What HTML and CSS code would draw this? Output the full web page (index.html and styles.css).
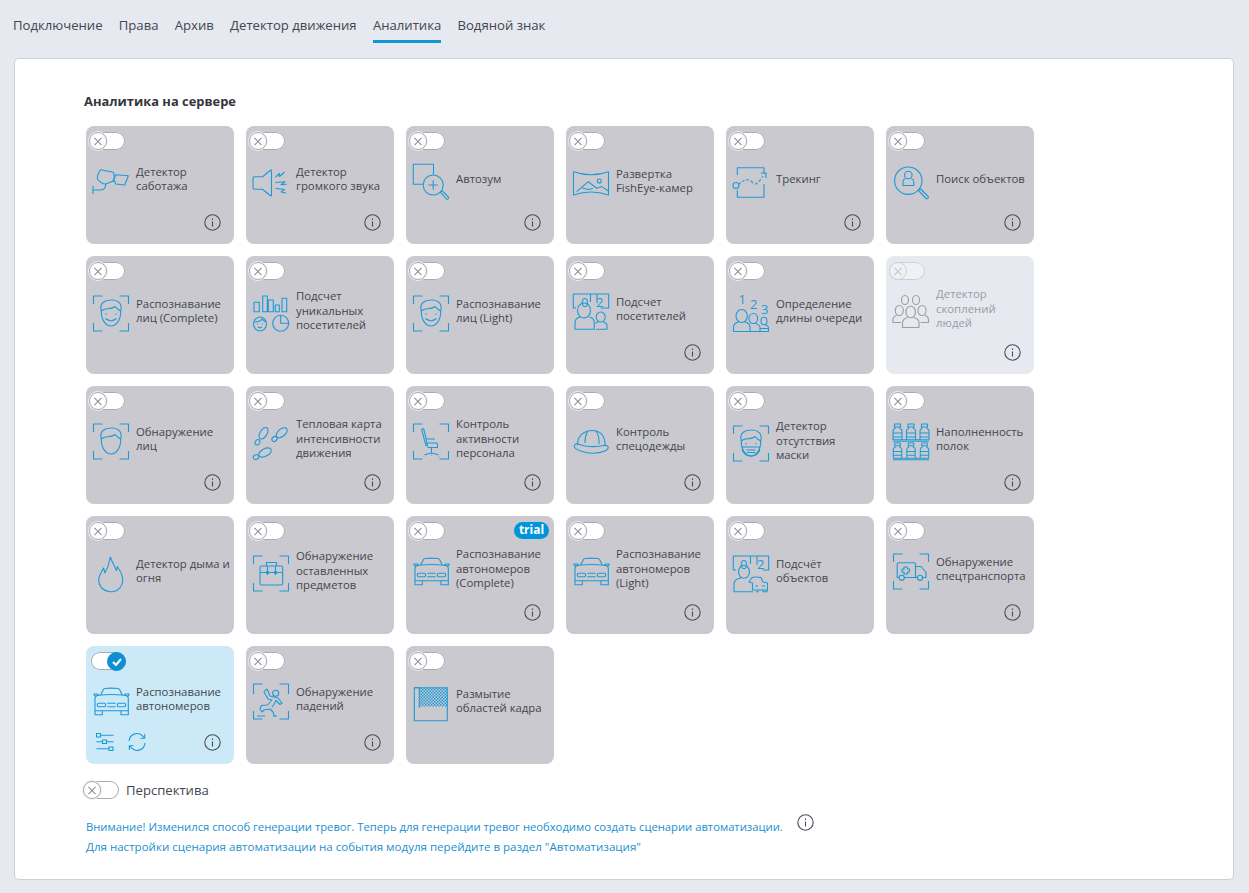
FILE: index.html
```html
<!DOCTYPE html>
<html lang="ru">
<head>
    <meta charset="UTF-8">
    <title>Аналитика</title>
    <link rel="stylesheet" href="styles.css">
</head>
<body>
    <svg class="sprite" xmlns="http://www.w3.org/2000/svg">
        <defs>
            <pattern id="checks" width="3" height="3" patternUnits="userSpaceOnUse">
                <rect width="1.5" height="1.5" fill="#1d9ad8" stroke="none"/>
                <rect x="1.5" y="1.5" width="1.5" height="1.5" fill="#1d9ad8" stroke="none"/>
            </pattern>
        </defs>
        <symbol id="i-frame" viewBox="0 0 36 36" overflow="visible">
            <path d="M.5 11V3h9M26.500 3h9v8M35.500 30v8h-9M9.500 38h-9v-8"/>
        </symbol>
        <symbol id="i-info" viewBox="0 0 17 17" overflow="visible">
            <circle cx="8.500" cy="8.500" r="7.700"/>
            <path d="M8.500 7.500v5M8.500 4.500v1.600"/>
        </symbol>
        <symbol id="i-tamper" viewBox="0 0 36 36" overflow="visible">
            <path d="M4.300 18c0-3 1.500-7 3.400-9.300l12.600 2.600c1 2 1.200 5.500.7 8.400l-8.300 3.300c-3 0-6-2-8.400-5z"/>
            <path d="M22.700 13.700l12.600 1-3.600 9.300-9-1-.7-2.200-2.200-1 1.500-2.200z"/>
            <path d="M0 24.700V33M0 29h7.700c3 0 5-2.500 5-6"/>
        </symbol>
        <symbol id="i-loud" viewBox="0 0 36 36" overflow="visible">
            <path d="M9.500 15.700H1.500q-1.500 0-1.500 1.500v9.600q0 1.500 1.500 1.500h8l8 6.500q1 .6 1-.5V9.700q0-1.100-1-.5z"/>
            <path d="M22.500 16l4-3.500v3l5-4.500M22.500 21.500l9.500-.8-4 3 5.500-.4M22.500 27.500l9 1-3.500 2.500 5 1"/>
        </symbol>
        <symbol id="i-zoom" viewBox="0 0 36 36" overflow="visible">
            <path d="M20.500 13.500V3.300H.3v20h9.600"/>
            <circle cx="20.200" cy="24" r="10"/>
            <path d="M15.500 24h9.400M20.200 19.300v9.400"/>
            <path d="M27.500 31.200l1.500-1.500 6.300 6.300q.6 1-.2 1.800t-1.800.2z"/>
        </symbol>
        <symbol id="i-fisheye" viewBox="0 0 36 36" overflow="visible">
            <path d="M.5 8.700q17.500 6 35 0v23.300q-17.500-6-35 0z"/>
            <path d="M3.700 28.700L15.300 18.700l8.400 6.600 5-1.700 6.800 4.400M9 25l6.300 1.500 4.500-1"/>
            <circle cx="26.300" cy="18" r="2"/>
        </symbol>
        <symbol id="i-track" viewBox="0 0 36 36" overflow="visible">
            <path d="M4.300 14V6.800h26.700v6M31 23v13.300H4.300v-7"/>
            <circle cx="3" cy="24.500" r="3"/>
            <path d="M6 23q3-3 7-4" stroke-dasharray="2.500 1.500"/>
            <path d="M13 19q4-1 7 3t10-7" stroke-dasharray="3 2"/>
            <path d="M28 12h5v5"/>
        </symbol>
        <symbol id="i-search" viewBox="0 0 36 36" overflow="visible">
            <circle cx="15.300" cy="19.700" r="13.700"/>
            <path d="M25.500 29.500l2.200-1.500 7.500 7.500q.6 1-.3 1.800t-1.900.2z"/>
            <circle cx="15.300" cy="14" r="3.800"/>
            <path d="M12.500 17.500q-2.500 1-2.500 3v4h10.800v-4q0-2-2.500-3"/>
        </symbol>
        <symbol id="i-head" viewBox="0 0 36 36" overflow="visible">
            <path d="M8.300 18C8 27 13 33 18 33s10-6 9.700-15"/>
            <path d="M8.300 18C6 10 12 7 18 7c6-.5 12 3 9.700 11-2-1.500-4.700-2.500-5.700-4.500-3 2.500-9 2-12.300 3.500z"/>
        </symbol>
        <symbol id="i-face" viewBox="0 0 36 36" overflow="visible">
            <use href="#i-frame"/>
            <use href="#i-head"/>
            <path d="M13 20.500v1.200M23 20.500v1.200M12.500 25.500q5.500 4.500 11 0"/>
        </symbol>
        <symbol id="i-face-plain" viewBox="0 0 36 36" overflow="visible">
            <use href="#i-frame"/>
            <use href="#i-head"/>
        </symbol>
        <symbol id="i-unique" viewBox="0 0 36 36" overflow="visible">
            <path d="M1 9.300h5.300v9.400H1zM9.700 3h4.600v15.700H9.700zM15.300 7h5v11.700h-5zM22.300 12h4v6.700h-4zM29 5.300h4.700v13.400H29z"/>
            <ellipse cx="7" cy="31" rx="6.500" ry="7"/>
            <path d="M1 29c4 0 7-1 8-3q2 2 4 3M4.500 30.500v1M9.500 30.500v1M5 34q2 1.500 4 0"/>
            <circle cx="27.700" cy="30.300" r="8"/>
            <path d="M27.700 22.300v8h8"/>
        </symbol>
        <symbol id="i-visitors" viewBox="0 0 36 36" overflow="visible">
            <path d="M3 17H.3V3h35.400v14h-8M17.500 3v8M24 3v9"/>
            <ellipse cx="11" cy="19.500" rx="6.500" ry="7.500"/>
            <path d="M7 26q-5 1-5 6v6.300h19.300V32q0-5-5-6"/>
            <ellipse cx="27.700" cy="26" rx="4.500" ry="5"/>
            <path d="M25 31q-2 .5-2.500 1.500M30.500 31q3.500 1 3.500 3.500v3.800H23"/>
        </symbol>
        <symbol id="i-queue" viewBox="0 0 36 36" overflow="visible">
            <ellipse cx="8.700" cy="23" rx="5.700" ry="6.500"/>
            <path d="M5.500 29q-5 1-5 5.500v4h16.500v-4q0-4.500-5-5.500"/>
            <ellipse cx="20.300" cy="25.500" rx="4.300" ry="5"/>
            <path d="M22.500 30.500q4 1 4.500 4v4h-10"/>
            <ellipse cx="31" cy="28" rx="3" ry="3.800"/>
            <path d="M32.500 32q3 .5 3 3v3.500H27M27 35.500h8.500"/>
        </symbol>
        <symbol id="i-crowd" viewBox="0 0 36 36" overflow="visible">
            <ellipse cx="12" cy="9" rx="3.500" ry="4.500"/>
            <ellipse cx="23" cy="9" rx="3.500" ry="4.500"/>
            <ellipse cx="6.300" cy="19.500" rx="4" ry="5"/>
            <ellipse cx="17.700" cy="21" rx="4.800" ry="5.800"/>
            <ellipse cx="29" cy="19.500" rx="4" ry="5"/>
            <path d="M3.500 24.500Q0 25.500 0 29v2.500h8M32 24.500q3.500 1 3.500 4.500v2.500h-8"/>
            <path d="M14.500 26.500Q9.500 28 9.500 32v4.500h16.500V32q0-4-5-5.500"/>
        </symbol>
        <symbol id="i-steps" viewBox="0 0 36 36" overflow="visible">
            <ellipse cx="10.500" cy="12.300" rx="3.500" ry="6.500" transform="rotate(32 10.500 12.300)"/>
            <ellipse cx="4.500" cy="21.300" rx="2.200" ry="2.800" transform="rotate(32 4.500 21.300)"/>
            <ellipse cx="28.700" cy="11.700" rx="3.600" ry="6.500" transform="rotate(50 28.700 11.700)"/>
            <ellipse cx="21.500" cy="18" rx="2.300" ry="2.800" transform="rotate(50 21.500 18)"/>
            <ellipse cx="12" cy="31.500" rx="3.800" ry="6.800" transform="rotate(62 12 31.500)"/>
            <ellipse cx="3" cy="36" rx="2.300" ry="2.800" transform="rotate(62 3 36)"/>
        </symbol>
        <symbol id="i-chair" viewBox="0 0 36 36" overflow="visible">
            <use href="#i-frame"/>
            <path d="M8.500 8.200l2.200-.4 4 17H13z"/>
            <path d="M13 22h10.500q1 0 1 1v3.500H14.500M13 18h9M18.500 26.500v6M11.500 34q7-3.500 14 0"/>
            <path d="M11 35.500v.5M26 35.500v.5M18.500 34.500v.5"/>
        </symbol>
        <symbol id="i-helmet" viewBox="0 0 36 36" overflow="visible">
            <path d="M4.500 24.500C4 15 11 9.500 19.500 9.500c7.500 0 13 5.500 12.500 15"/>
            <path d="M14.500 10.500q-2.500 4.500-2.500 11.500M23 10q3.500 5 3 13"/>
            <path d="M4.500 22.500C2.500 23 1 24 1.200 25.500c.5 3 10 6.700 19 6.700 9 0 15.300-3 15-6 0-1.500-1.700-2-4-1.700-5 1-13 1.500-19 .5-3-.5-6-1.500-7.700-2.500z"/>
        </symbol>
        <symbol id="i-mask" viewBox="0 0 36 36" overflow="visible">
            <use href="#i-frame"/>
            <use href="#i-head"/>
            <path d="M13 20v1.200M23 20v1.200M9.500 24h17v4q-3 5-8.500 5t-8.500-5zM13.500 27h9M13.500 29.500h9"/>
        </symbol>
        <symbol id="i-bottle" viewBox="0 0 9 16" overflow="visible">
            <path d="M1.500 0h6v3h-6zM2 3v1.500Q0 5 0 7v9M7 3v1.500Q9 5 9 7v9M0 9h9M0 13h9"/>
        </symbol>
        <symbol id="i-shelf" viewBox="0 0 36 36" overflow="visible">
            <use href="#i-bottle" x="0" y="3" width="9" height="16"/>
            <use href="#i-bottle" x="13.500" y="3" width="9" height="16"/>
            <use href="#i-bottle" x="27" y="3" width="9" height="16"/>
            <path d="M0 18.800h36M0 20.200h36"/>
            <use href="#i-bottle" x="0" y="22" width="9" height="15"/>
            <use href="#i-bottle" x="13.500" y="22" width="9" height="15"/>
            <use href="#i-bottle" x="27" y="22" width="9" height="15"/>
            <path d="M0 37.300h36M0 38.700h36"/>
        </symbol>
        <symbol id="i-fire" viewBox="0 0 36 36" overflow="visible">
            <path d="M15.500 38.500C9 37.500 5.500 32 5.700 26.500c.2-5 3.300-7.500 4.800-11.500.7 1.800 1 3.500 1.500 5 2.500-4.500 4.300-10 5.300-16 2 6 5 10 6 13.500.5-1 1-2.500.9-4 3.300 4.500 5.500 9 5.500 13.500 0 6-3.700 10.500-9 11.500-1 .2-3.500.2-4.700 0z"/>
        </symbol>
        <symbol id="i-case" viewBox="0 0 36 36" overflow="visible">
            <use href="#i-frame"/>
            <path d="M7 14.500q0-1.500 1.500-1.500h19.700q1.500 0 1.500 1.500v16q0 1.500-1.500 1.500H8.500Q7 32 7 30.500z"/>
            <path d="M13.500 13V9.500h10V13M7 19.500h6M15.500 19.500h6M23.500 19.500h6M14.500 13v9M22.500 13v9"/>
            <circle cx="14.500" cy="19.500" r="1.200"/>
            <circle cx="22.500" cy="19.500" r="1.200"/>
        </symbol>
        <symbol id="i-car" viewBox="0 0 36 36" overflow="visible">
            <path d="M2 17q0-1.800 2-2.400L7.700 14l2.600-5.200q.5-1 2-1.300 6-.8 12.400 0 1.500.3 2 1.300L29.300 14l4 .6q2 .6 2 2.400v12.700H2z"/>
            <path d="M7.700 14q10.800-1 21.600 0M2.500 15l-1.500-1v-1h3.500l1 1M34.800 15l1.200-1v-1h-3.500l-1 1"/>
            <path d="M2 29.700v4h7.300v-4M28 29.700v4h7.300v-4"/>
            <rect x="4.300" y="22.300" width="8.400" height="3.400" rx="1.500"/>
            <rect x="24.300" y="22.300" width="8.400" height="3.400" rx="1.500"/>
            <path d="M14.300 22.300h8.400M14.300 25.700h8.400"/>
        </symbol>
        <symbol id="i-objects" viewBox="0 0 36 36" overflow="visible">
            <path d="M3 17H.3V3h35.400v14h-6M17.500 3v8M24 3v9"/>
            <ellipse cx="11" cy="18.700" rx="5.500" ry="6.500"/>
            <path d="M8 25q-7 1-7 6v7.700h19"/>
            <path d="M16 29l3-4.500q3-1 9 0l2 4.500 4.500 1v7h-15v-7z"/>
            <path d="M23 38.700h3M30 37v1.700h4V37M22 33h3M29 33h3"/>
        </symbol>
        <symbol id="i-truck" viewBox="0 0 36 36" overflow="visible">
            <use href="#i-frame"/>
            <path d="M5.500 26.500H4.200V13q0-1.300 1.300-1.300h15.700q1.300 0 1.300 1.300v13.500H11.500M22.500 15.500h5.500l5 6v5h-3M24 26.500h-1.500"/>
            <circle cx="8.700" cy="26.800" r="2.600"/>
            <circle cx="27" cy="26.800" r="2.600"/>
            <path d="M11 16h3.500v2h2v3h-2v2H11v-2H9v-3h2z"/>
        </symbol>
        <symbol id="i-fall" viewBox="0 0 36 36" overflow="visible">
            <path d="M.5 13V3h9M26.500 3h9v10M35.500 30v8h-9M9.500 38h-9V30M4 35h8M20 35h4"/>
            <circle cx="22.700" cy="12.300" r="3"/>
            <path d="M12 9.500l-1 1.500 4 7 4 1-4.500 5-6 .5-1.500 3.500 2 3 2-2 6-1 3 3 1.500 4.500"/>
            <path d="M14 8l3 7 8 2 4 5-2 1.500-4-4-2 4-2 2.500"/>
            <path d="M12 9.500l2-1.500"/>
        </symbol>
        <symbol id="i-blur" viewBox="0 0 36 36" overflow="visible">
            <rect x="6.500" y="5" width="27.500" height="18.500" fill="url(#checks)" stroke="none"/>
            <path d="M1.300 4.700h33v33h-33z"/>
            <path d="M1.300 4.700h5v20"/>
        </symbol>
        <symbol id="i-sliders" viewBox="0 0 18 18" overflow="visible">
            <path d="M.5.500h4v3.500h-4zM6.500 7h4v3.500h-4zM13 14h4v3.500h-4zM4.500 2.200H17.500M.5 8.800h6M10.500 8.800h7M.5 15.700H13"/>
        </symbol>
        <symbol id="i-refresh" viewBox="0 0 18 18" overflow="visible">
            <path d="M1 8A8 8 0 0 1 14.500 2.800L16.500 5M16.700 1v4.200h-4.200"/>
            <path d="M17 10A8 8 0 0 1 3.500 15.200L1.500 13M1.300 17v-4.200h4.200"/>
        </symbol>
    </svg>

    <nav class="tabs">
        <a class="tab">Подключение</a>
        <a class="tab">Права</a>
        <a class="tab">Архив</a>
        <a class="tab">Детектор движения</a>
        <a class="tab active">Аналитика</a>
        <a class="tab">Водяной знак</a>
    </nav>

    <main class="panel">
        <h2 class="section-title">Аналитика на сервере</h2>
        <div class="grid">
            <div class="card">
                <span class="toggle"><span class="knob"></span></span>
                <div class="card-body"><svg class="icon"><use href="#i-tamper"/></svg><span class="label">Детектор<br>саботажа</span></div>
                <div class="card-foot"><svg class="info"><use href="#i-info"/></svg></div>
            </div>
            <div class="card">
                <span class="toggle"><span class="knob"></span></span>
                <div class="card-body"><svg class="icon"><use href="#i-loud"/></svg><span class="label">Детектор<br>громкого звука</span></div>
                <div class="card-foot"><svg class="info"><use href="#i-info"/></svg></div>
            </div>
            <div class="card">
                <span class="toggle"><span class="knob"></span></span>
                <div class="card-body"><svg class="icon"><use href="#i-zoom"/></svg><span class="label">Автозум</span></div>
                <div class="card-foot"><svg class="info"><use href="#i-info"/></svg></div>
            </div>
            <div class="card">
                <span class="toggle"><span class="knob"></span></span>
                <div class="card-body low"><svg class="icon"><use href="#i-fisheye"/></svg><span class="label">Развертка<br>FishEye-камер</span></div>
            </div>
            <div class="card">
                <span class="toggle"><span class="knob"></span></span>
                <div class="card-body"><svg class="icon"><use href="#i-track"/></svg><span class="label">Трекинг</span></div>
                <div class="card-foot"><svg class="info"><use href="#i-info"/></svg></div>
            </div>
            <div class="card">
                <span class="toggle"><span class="knob"></span></span>
                <div class="card-body"><svg class="icon"><use href="#i-search"/></svg><span class="label">Поиск объектов</span></div>
                <div class="card-foot"><svg class="info"><use href="#i-info"/></svg></div>
            </div>

            <div class="card">
                <span class="toggle"><span class="knob"></span></span>
                <div class="card-body low"><svg class="icon"><use href="#i-face"/></svg><span class="label">Распознавание<br>лиц (Complete)</span></div>
            </div>
            <div class="card">
                <span class="toggle"><span class="knob"></span></span>
                <div class="card-body low"><svg class="icon"><use href="#i-unique"/></svg><span class="label">Подсчет<br>уникальных<br>посетителей</span></div>
            </div>
            <div class="card">
                <span class="toggle"><span class="knob"></span></span>
                <div class="card-body low"><svg class="icon"><use href="#i-face"/></svg><span class="label">Распознавание<br>лиц (Light)</span></div>
            </div>
            <div class="card">
                <span class="toggle"><span class="knob"></span></span>
                <div class="card-body"><svg class="icon"><use href="#i-visitors"/><text class="digit" x="8" y="16">0</text><text class="digit" x="23" y="16">2</text></svg><span class="label">Подсчет<br>посетителей</span></div>
                <div class="card-foot"><svg class="info"><use href="#i-info"/></svg></div>
            </div>
            <div class="card">
                <span class="toggle"><span class="knob"></span></span>
                <div class="card-body low"><svg class="icon"><use href="#i-queue"/><text class="digit" x="5.500" y="11">1</text><text class="digit" x="17" y="16">2</text><text class="digit" x="28" y="21">3</text></svg><span class="label">Определение<br>длины очереди</span></div>
            </div>
            <div class="card disabled">
                <span class="toggle"><span class="knob"></span></span>
                <div class="card-body"><svg class="icon"><use href="#i-crowd"/></svg><span class="label">Детектор<br>скоплений<br>людей</span></div>
                <div class="card-foot"><svg class="info"><use href="#i-info"/></svg></div>
            </div>

            <div class="card">
                <span class="toggle"><span class="knob"></span></span>
                <div class="card-body"><svg class="icon"><use href="#i-face-plain"/></svg><span class="label">Обнаружение<br>лиц</span></div>
                <div class="card-foot"><svg class="info"><use href="#i-info"/></svg></div>
            </div>
            <div class="card">
                <span class="toggle"><span class="knob"></span></span>
                <div class="card-body"><svg class="icon"><use href="#i-steps"/></svg><span class="label">Тепловая карта<br>интенсивности<br>движения</span></div>
                <div class="card-foot"><svg class="info"><use href="#i-info"/></svg></div>
            </div>
            <div class="card">
                <span class="toggle"><span class="knob"></span></span>
                <div class="card-body"><svg class="icon"><use href="#i-chair"/></svg><span class="label">Контроль<br>активности<br>персонала</span></div>
                <div class="card-foot"><svg class="info"><use href="#i-info"/></svg></div>
            </div>
            <div class="card">
                <span class="toggle"><span class="knob"></span></span>
                <div class="card-body"><svg class="icon"><use href="#i-helmet"/></svg><span class="label">Контроль<br>спецодежды</span></div>
                <div class="card-foot"><svg class="info"><use href="#i-info"/></svg></div>
            </div>
            <div class="card">
                <span class="toggle"><span class="knob"></span></span>
                <div class="card-body low"><svg class="icon"><use href="#i-mask"/></svg><span class="label">Детектор<br>отсутствия<br>маски</span></div>
            </div>
            <div class="card">
                <span class="toggle"><span class="knob"></span></span>
                <div class="card-body"><svg class="icon"><use href="#i-shelf"/></svg><span class="label">Наполненность<br>полок</span></div>
                <div class="card-foot"><svg class="info"><use href="#i-info"/></svg></div>
            </div>

            <div class="card">
                <span class="toggle"><span class="knob"></span></span>
                <div class="card-body low"><svg class="icon"><use href="#i-fire"/></svg><span class="label">Детектор дыма и<br>огня</span></div>
            </div>
            <div class="card">
                <span class="toggle"><span class="knob"></span></span>
                <div class="card-body low"><svg class="icon"><use href="#i-case"/></svg><span class="label">Обнаружение<br>оставленных<br>предметов</span></div>
            </div>
            <div class="card">
                <span class="toggle"><span class="knob"></span></span>
                <span class="trial">trial</span>
                <div class="card-body"><svg class="icon"><use href="#i-car"/></svg><span class="label">Распознавание<br>автономеров<br>(Complete)</span></div>
                <div class="card-foot"><svg class="info"><use href="#i-info"/></svg></div>
            </div>
            <div class="card">
                <span class="toggle"><span class="knob"></span></span>
                <div class="card-body"><svg class="icon"><use href="#i-car"/></svg><span class="label">Распознавание<br>автономеров<br>(Light)</span></div>
                <div class="card-foot"><svg class="info"><use href="#i-info"/></svg></div>
            </div>
            <div class="card">
                <span class="toggle"><span class="knob"></span></span>
                <div class="card-body low"><svg class="icon"><use href="#i-objects"/><text class="digit" x="7" y="16">0</text><text class="digit" x="24" y="16">2</text></svg><span class="label">Подсчёт<br>объектов</span></div>
            </div>
            <div class="card">
                <span class="toggle"><span class="knob"></span></span>
                <div class="card-body"><svg class="icon"><use href="#i-truck"/></svg><span class="label">Обнаружение<br>спецтранспорта</span></div>
                <div class="card-foot"><svg class="info"><use href="#i-info"/></svg></div>
            </div>

            <div class="card enabled">
                <span class="toggle on"><span class="knob"><svg class="tick" viewBox="0 0 10 8"><path d="M1 4l3 3 5-6"/></svg></span></span>
                <div class="card-body"><svg class="icon"><use href="#i-car"/></svg><span class="label">Распознавание<br>автономеров</span></div>
                <div class="card-foot">
                    <svg class="tool"><use href="#i-sliders"/></svg>
                    <svg class="tool"><use href="#i-refresh"/></svg>
                    <svg class="info"><use href="#i-info"/></svg>
                </div>
            </div>
            <div class="card">
                <span class="toggle"><span class="knob"></span></span>
                <div class="card-body"><svg class="icon"><use href="#i-fall"/></svg><span class="label">Обнаружение<br>падений</span></div>
                <div class="card-foot"><svg class="info"><use href="#i-info"/></svg></div>
            </div>
            <div class="card">
                <span class="toggle"><span class="knob"></span></span>
                <div class="card-body low"><svg class="icon"><use href="#i-blur"/></svg><span class="label">Размытие<br>областей кадра</span></div>
            </div>
        </div>

        <div class="perspective">
            <span class="toggle plain"><span class="knob"></span></span>
            <span>Перспектива</span>
        </div>

        <div class="notice">
            <p>Внимание! Изменился способ генерации тревог. Теперь для генерации тревог необходимо создать сценарии автоматизации.</p>
            <svg class="info"><use href="#i-info"/></svg>
        </div>
        <p class="notice-link">Для настройки сценария автоматизации на события модуля перейдите в раздел "Автоматизация"</p>
    </main>
</body>
</html>
```

FILE: styles.css
```css
body {
    margin: 0;
    height: 893px;
    overflow: hidden;
    background-color: #e6e9ef;
    color: #42464f;
    font-family: "Open Sans", "Noto Sans", sans-serif;
}
.sprite {
    display: block;
    width: 0;
    height: 0;
}
.tabs {
    display: flex;
    gap: 16.25px;
    height: 58px;
    padding-left: 13px;
    box-sizing: border-box;
}
.tab {
    height: 43px;
    padding-top: 16px;
    box-sizing: border-box;
    font-size: 13.13px;
    line-height: 19px;
    white-space: nowrap;
}
.tab.active {
    border-bottom: 3px solid #0e96d6;
}
.panel {
    width: 1220px;
    height: 822px;
    margin-left: 14px;
    padding: 34px 0 0 69px;
    box-sizing: border-box;
    background-color: #fff;
    border: 1px solid #cdd0d6;
    border-radius: 5px;
}
.section-title {
    margin: 0 0 16px;
    font-size: 12.9px;
    line-height: 17px;
    font-weight: 700;
    color: #33363d;
}
.grid {
    display: grid;
    grid-template-columns: repeat(6, 148px);
    grid-auto-rows: 118px;
    gap: 12px;
    margin-left: 2px;
}
.card {
    position: relative;
    display: flex;
    flex-direction: column;
    background-color: #cac9cf;
    border-radius: 8px;
}
.card.disabled {
    background-color: #e6e9ef;
}
.card.enabled {
    background-color: #cbe9f6;
}
.toggle {
    display: flex;
    width: 36px;
    height: 18px;
    margin: 6px 0 0 3px;
    background-color: #fff;
    border-radius: 9px;
    box-shadow: inset 0 0 0 1px #a9abb1;
}
.knob {
    display: flex;
    align-items: center;
    justify-content: center;
    position: relative;
    width: 18px;
    height: 18px;
    box-sizing: border-box;
    background-color: #fff;
    border: 1px solid #a9abb1;
    border-radius: 50%;
    box-shadow: 0 0 0 1px #eceef1;
}
.knob::before,
.knob::after {
    content: "";
    position: absolute;
    width: 10px;
    height: 1px;
    background-color: #8a8c93;
    transform: rotate(45deg);
}
.knob::after {
    transform: rotate(-45deg);
}
.toggle.on {
    justify-content: flex-end;
    width: 35px;
    margin-left: 5px;
}
.toggle.on .knob {
    flex: none;
    background-color: #0e8fd2;
    border-color: #0e8fd2;
    box-shadow: none;
    width: 19px;
    height: 19px;
}
.toggle.on .knob::before,
.toggle.on .knob::after {
    display: none;
}
.tick {
    width: 10px;
    height: 8px;
    fill: none;
    stroke: #fff;
    stroke-width: 2;
}
.disabled .toggle {
    background-color: #eff1f4;
    box-shadow: inset 0 0 0 1px #ced0d5;
}
.disabled .knob {
    background-color: #eff1f4;
    border-color: #ced0d5;
    box-shadow: none;
}
.disabled .knob::before,
.disabled .knob::after {
    background-color: #c3c5ca;
}
.card-body {
    display: flex;
    align-items: center;
    gap: 7px;
    height: 36px;
    margin-top: 11px;
    padding-left: 7px;
}
.card-body.low {
    margin-top: 13px;
}
.icon {
    flex: none;
    width: 36px;
    height: 36px;
    overflow: visible;
    fill: none;
    stroke: #1d9ad8;
    stroke-width: 1.1;
    stroke-linejoin: round;
    color: #1d9ad8;
}
.digit {
    fill: currentColor;
    stroke: none;
    font-size: 13px;
    font-family: "Open Sans", sans-serif;
}
.disabled .icon {
    stroke: #9c9ea4;
    color: #9c9ea4;
}
.label {
    font-size: 11.35px;
    line-height: 14.4px;
    white-space: nowrap;
}
.disabled .label {
    color: #9a9ca5;
}
.card-foot {
    display: flex;
    align-items: center;
    gap: 14px;
    height: 17px;
    margin-top: auto;
    padding: 0 13.5px 13.5px 10px;
}
.info {
    flex: none;
    width: 17px;
    height: 17px;
    margin-left: auto;
    overflow: visible;
    fill: none;
    stroke: #4a4d57;
    stroke-width: 1.1;
}
.tool {
    flex: none;
    width: 18px;
    height: 18px;
    overflow: visible;
    fill: none;
    stroke: #1d9ad8;
    stroke-width: 1.1;
}
.trial {
    position: absolute;
    top: 6px;
    right: 5px;
    width: 35px;
    height: 17px;
    background-color: #0095d9;
    border-radius: 9px;
    color: #fff;
    font-size: 12px;
    font-weight: 700;
    line-height: 16px;
    text-align: center;
}
.perspective {
    display: flex;
    align-items: center;
    gap: 7px;
    margin: 17px 0 0 -1px;
    font-size: 13.1px;
}
.toggle.plain {
    margin: 0;
    box-shadow: inset 0 0 0 1px #a9abb1;
}
.notice {
    display: flex;
    align-items: flex-start;
    gap: 14.5px;
    margin: 18px 0 0 2px;
    width: 740px;
    height: 20px;
    color: #1b8fd0;
    font-size: 11.24px;
    line-height: 19px;
}
.notice p {
    margin: 0;
    white-space: nowrap;
}
.notice .info {
    margin: -3px 0 0;
}
.notice-link {
    margin: 0 0 0 2px;
    color: #1b8fd0;
    font-size: 11.55px;
    line-height: 19px;
    white-space: nowrap;
}
```
